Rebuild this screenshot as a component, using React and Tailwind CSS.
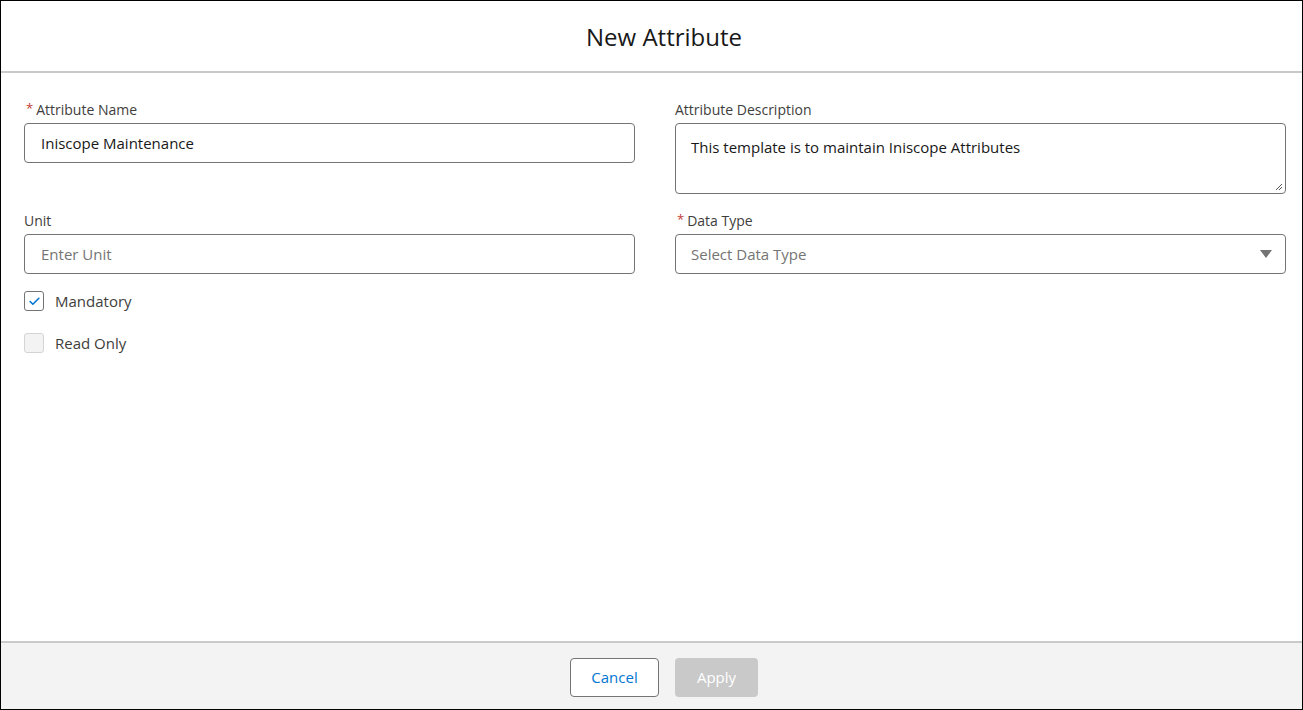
import { Check } from "lucide-react";

function Label({ required, children }) {
  return (
    <div className="flex items-center h-[20px] mb-[4px] text-[14px] text-[#3e3e3c]">
      {required && <span className="text-[#c23934] ml-[2px] mr-[3px] text-[13px]">*</span>}
      {children}
    </div>
  );
}

function Checkbox({ checked, label }) {
  return (
    <div className="flex items-center gap-[11px] h-[20px]">
      <div
        className={`w-[20px] h-[20px] rounded-[3px] border flex items-center justify-center ${
          checked ? "border-[#747474] bg-white" : "border-[#d4d4d4] bg-[#f3f3f3]"
        }`}
      >
        {checked && <Check className="w-[13px] h-[13px] text-[#0176d3]" strokeWidth={3} />}
      </div>
      <span className="text-[15px] text-[#3e3e3c]">{label}</span>
    </div>
  );
}

export default function App() {
  return (
    <div
      className="w-[1303px] h-[710px] border border-black bg-white flex flex-col"
      style={{ fontFamily: '"Open Sans", "Noto Sans", sans-serif' }}
    >
      {/* Header */}
      <div className="h-[72px] shrink-0 flex items-center justify-center pl-[25px] border-b-2 border-[#c9c9c9]">
        <h1 className="text-[24px] text-[#181818] mt-[2px]">New Attribute</h1>
      </div>

      {/* Body */}
      <div className="flex-1 pl-[23px] pt-[26px]">
        <div className="grid grid-cols-[611px_611px] gap-x-[40px]">
          <div>
            <Label required>Attribute Name</Label>
            <div className="h-[40px] border border-[#747474] rounded-[4px] px-[16px] flex items-center text-[15px] text-[#181818]">
              Iniscope Maintenance
            </div>
          </div>
          <div>
            <Label>Attribute Description</Label>
            <div className="relative h-[71px] border border-[#747474] rounded-[4px] px-[15px] pt-[12px] text-[15px] text-[#181818]">
              This template is to maintain Iniscope Attributes
              <svg className="absolute right-[2px] bottom-[2px]" width="8" height="8" viewBox="0 0 8 8">
                <path d="M7 1L1 7M7 4L4 7" stroke="#555" strokeWidth="1" />
              </svg>
            </div>
          </div>

          <div className="mt-[16px]">
            <Label>Unit</Label>
            <div className="h-[40px] border border-[#747474] rounded-[4px] px-[16px] flex items-center text-[15px] text-[#747474]">
              Enter Unit
            </div>
          </div>
          <div className="mt-[16px]">
            <Label required>Data Type</Label>
            <div className="h-[40px] border border-[#747474] rounded-[4px] pl-[15px] pr-[13px] flex items-center justify-between text-[15px] text-[#747474]">
              Select Data Type
              <svg width="12" height="8" viewBox="0 0 12 8">
                <path d="M0 0H12L6 8Z" fill="#747474" />
              </svg>
            </div>
          </div>
        </div>

        <div className="flex flex-col gap-[22px] mt-[17px]">
          <Checkbox checked label="Mandatory" />
          <Checkbox label="Read Only" />
        </div>
      </div>

      {/* Footer */}
      <div className="h-[68px] shrink-0 border-t-2 border-[#c9c9c9] bg-[#f3f3f3] flex items-start justify-center gap-[16px] pl-[25px] pt-[15px]">
        <button className="h-[39px] w-[89px] border border-[#747474] rounded-[4px] bg-white text-[15px] text-[#0176d3]">
          Cancel
        </button>
        <button className="h-[39px] w-[83px] rounded-[4px] bg-[#c9c9c9] text-[15px] text-white">
          Apply
        </button>
      </div>
    </div>
  );
}
